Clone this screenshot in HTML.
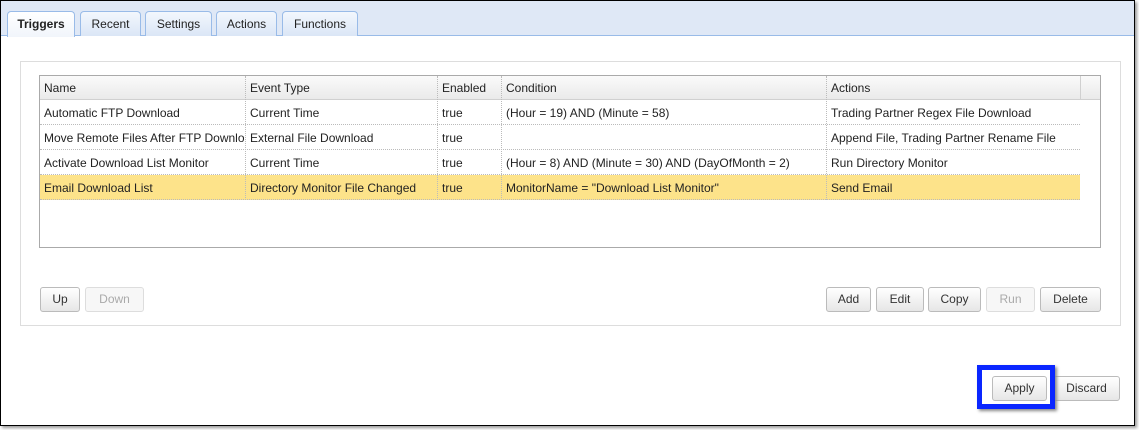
<!DOCTYPE html>
<html><head><style>
body{margin:0;width:1139px;height:430px;background:#fff;font-family:"Liberation Sans",Arial,sans-serif;font-size:12px;color:#222;position:relative;overflow:hidden}
.a{position:absolute}
.outer{left:0;top:0;width:1133px;height:424px;border:1px solid #000;box-shadow:2px 2px 3px #999;background:#fff}
.strip{left:1px;top:1px;width:1133px;height:34px;background:#dfe8f6;border-bottom:1px solid #99bbe8}
.tab{top:11px;height:24px;border:1px solid #99bbe8;border-bottom:none;border-radius:4px 4px 0 0;background:linear-gradient(#f3f7fd,#dbe6f6);text-align:center;line-height:24px;font-size:12px;color:#222}
.tab.on{background:linear-gradient(#fff,#f1f5fb);height:25px;font-weight:bold;color:#222}
.panel{left:20px;top:61px;width:1099px;height:263px;border:1px solid #ddd}
.grid{left:39px;top:75px;width:1060px;height:171px;border:1px solid #aaa;background:#fff}
.hdr{left:40px;top:76px;width:1060px;height:23px;background:linear-gradient(#fafafa,#eaeaea);border-bottom:1px solid #d0d0d0}
.row{left:40px;width:1040px;height:24px;border-bottom:1px dotted #bbb}
.sel{background:#fde38a}
.c{position:absolute;top:1px;line-height:24px;white-space:nowrap;overflow:hidden;padding-left:4px;height:24px}
.vl{position:absolute;top:76px;height:124px;border-left:1px dotted #bbb}
.btn{top:287px;height:23px;border:1px solid #bbb;border-radius:3px;background:linear-gradient(#fff,#e6e6e6);text-align:center;line-height:23px;color:#333}
.dis{color:#aaa;border-color:#ddd;background:#f7f7f7}
</style></head><body>
<div class="a outer"></div>
<div class="a strip"></div>
<div class="a tab on" style="left:7px;width:66px">Triggers</div>
<div class="a tab" style="left:80px;width:59px">Recent</div>
<div class="a tab" style="left:145px;width:65px">Settings</div>
<div class="a tab" style="left:216px;width:59px">Actions</div>
<div class="a tab" style="left:282px;width:74px">Functions</div>
<div class="a panel"></div>
<div class="a grid"></div>
<div class="a hdr"><div class="c" style="left:0;width:200px;line-height:23px">Name</div><div class="c" style="left:206px;line-height:23px">Event Type</div><div class="c" style="left:398px;line-height:23px">Enabled</div><div class="c" style="left:462px;line-height:23px">Condition</div><div class="c" style="left:787px;line-height:23px">Actions</div></div>
<div class="a row" style="top:100px"><div class="c" style="left:0;width:200px">Automatic FTP Download</div><div class="c" style="left:206px">Current Time</div><div class="c" style="left:398px">true</div><div class="c" style="left:462px">(Hour = 19) AND (Minute = 58)</div><div class="c" style="left:787px">Trading Partner Regex File Download</div></div>
<div class="a row" style="top:125px"><div class="c" style="left:0;width:200px">Move Remote Files After FTP Download</div><div class="c" style="left:206px">External File Download</div><div class="c" style="left:398px">true</div><div class="c" style="left:787px">Append File, Trading Partner Rename File</div></div>
<div class="a row" style="top:150px"><div class="c" style="left:0;width:200px">Activate Download List Monitor</div><div class="c" style="left:206px">Current Time</div><div class="c" style="left:398px">true</div><div class="c" style="left:462px">(Hour = 8) AND (Minute = 30) AND (DayOfMonth = 2)</div><div class="c" style="left:787px">Run Directory Monitor</div></div>
<div class="a row sel" style="top:175px"><div class="c" style="left:0;width:200px">Email Download List</div><div class="c" style="left:206px">Directory Monitor File Changed</div><div class="c" style="left:398px">true</div><div class="c" style="left:462px">MonitorName = "Download List Monitor"</div><div class="c" style="left:787px">Send Email</div></div>
<div class="vl" style="left:245px"></div><div class="vl" style="left:437px"></div><div class="vl" style="left:501px"></div><div class="vl" style="left:826px"></div><div class="vl" style="left:1080px;height:23px;border-left:1px solid #d0d0d0"></div>
<div class="a btn" style="left:40px;width:38px">Up</div>
<div class="a btn dis" style="left:85px;width:57px">Down</div>
<div class="a btn" style="left:826px;width:43px">Add</div>
<div class="a btn" style="left:876px;width:46px">Edit</div>
<div class="a btn" style="left:928px;width:51px">Copy</div>
<div class="a btn dis" style="left:986px;width:47px">Run</div>
<div class="a btn" style="left:1040px;width:59px">Delete</div>
<div class="a btn" style="left:1053px;top:376px;width:65px">Discard</div>
<div class="a" style="left:977px;top:365px;width:68px;height:34px;border:5px solid #0a26ff;box-shadow:2px 2px 3px #888;background:#fff"></div>
<div class="a btn" style="left:992px;top:376px;width:53px">Apply</div>
</body></html>
